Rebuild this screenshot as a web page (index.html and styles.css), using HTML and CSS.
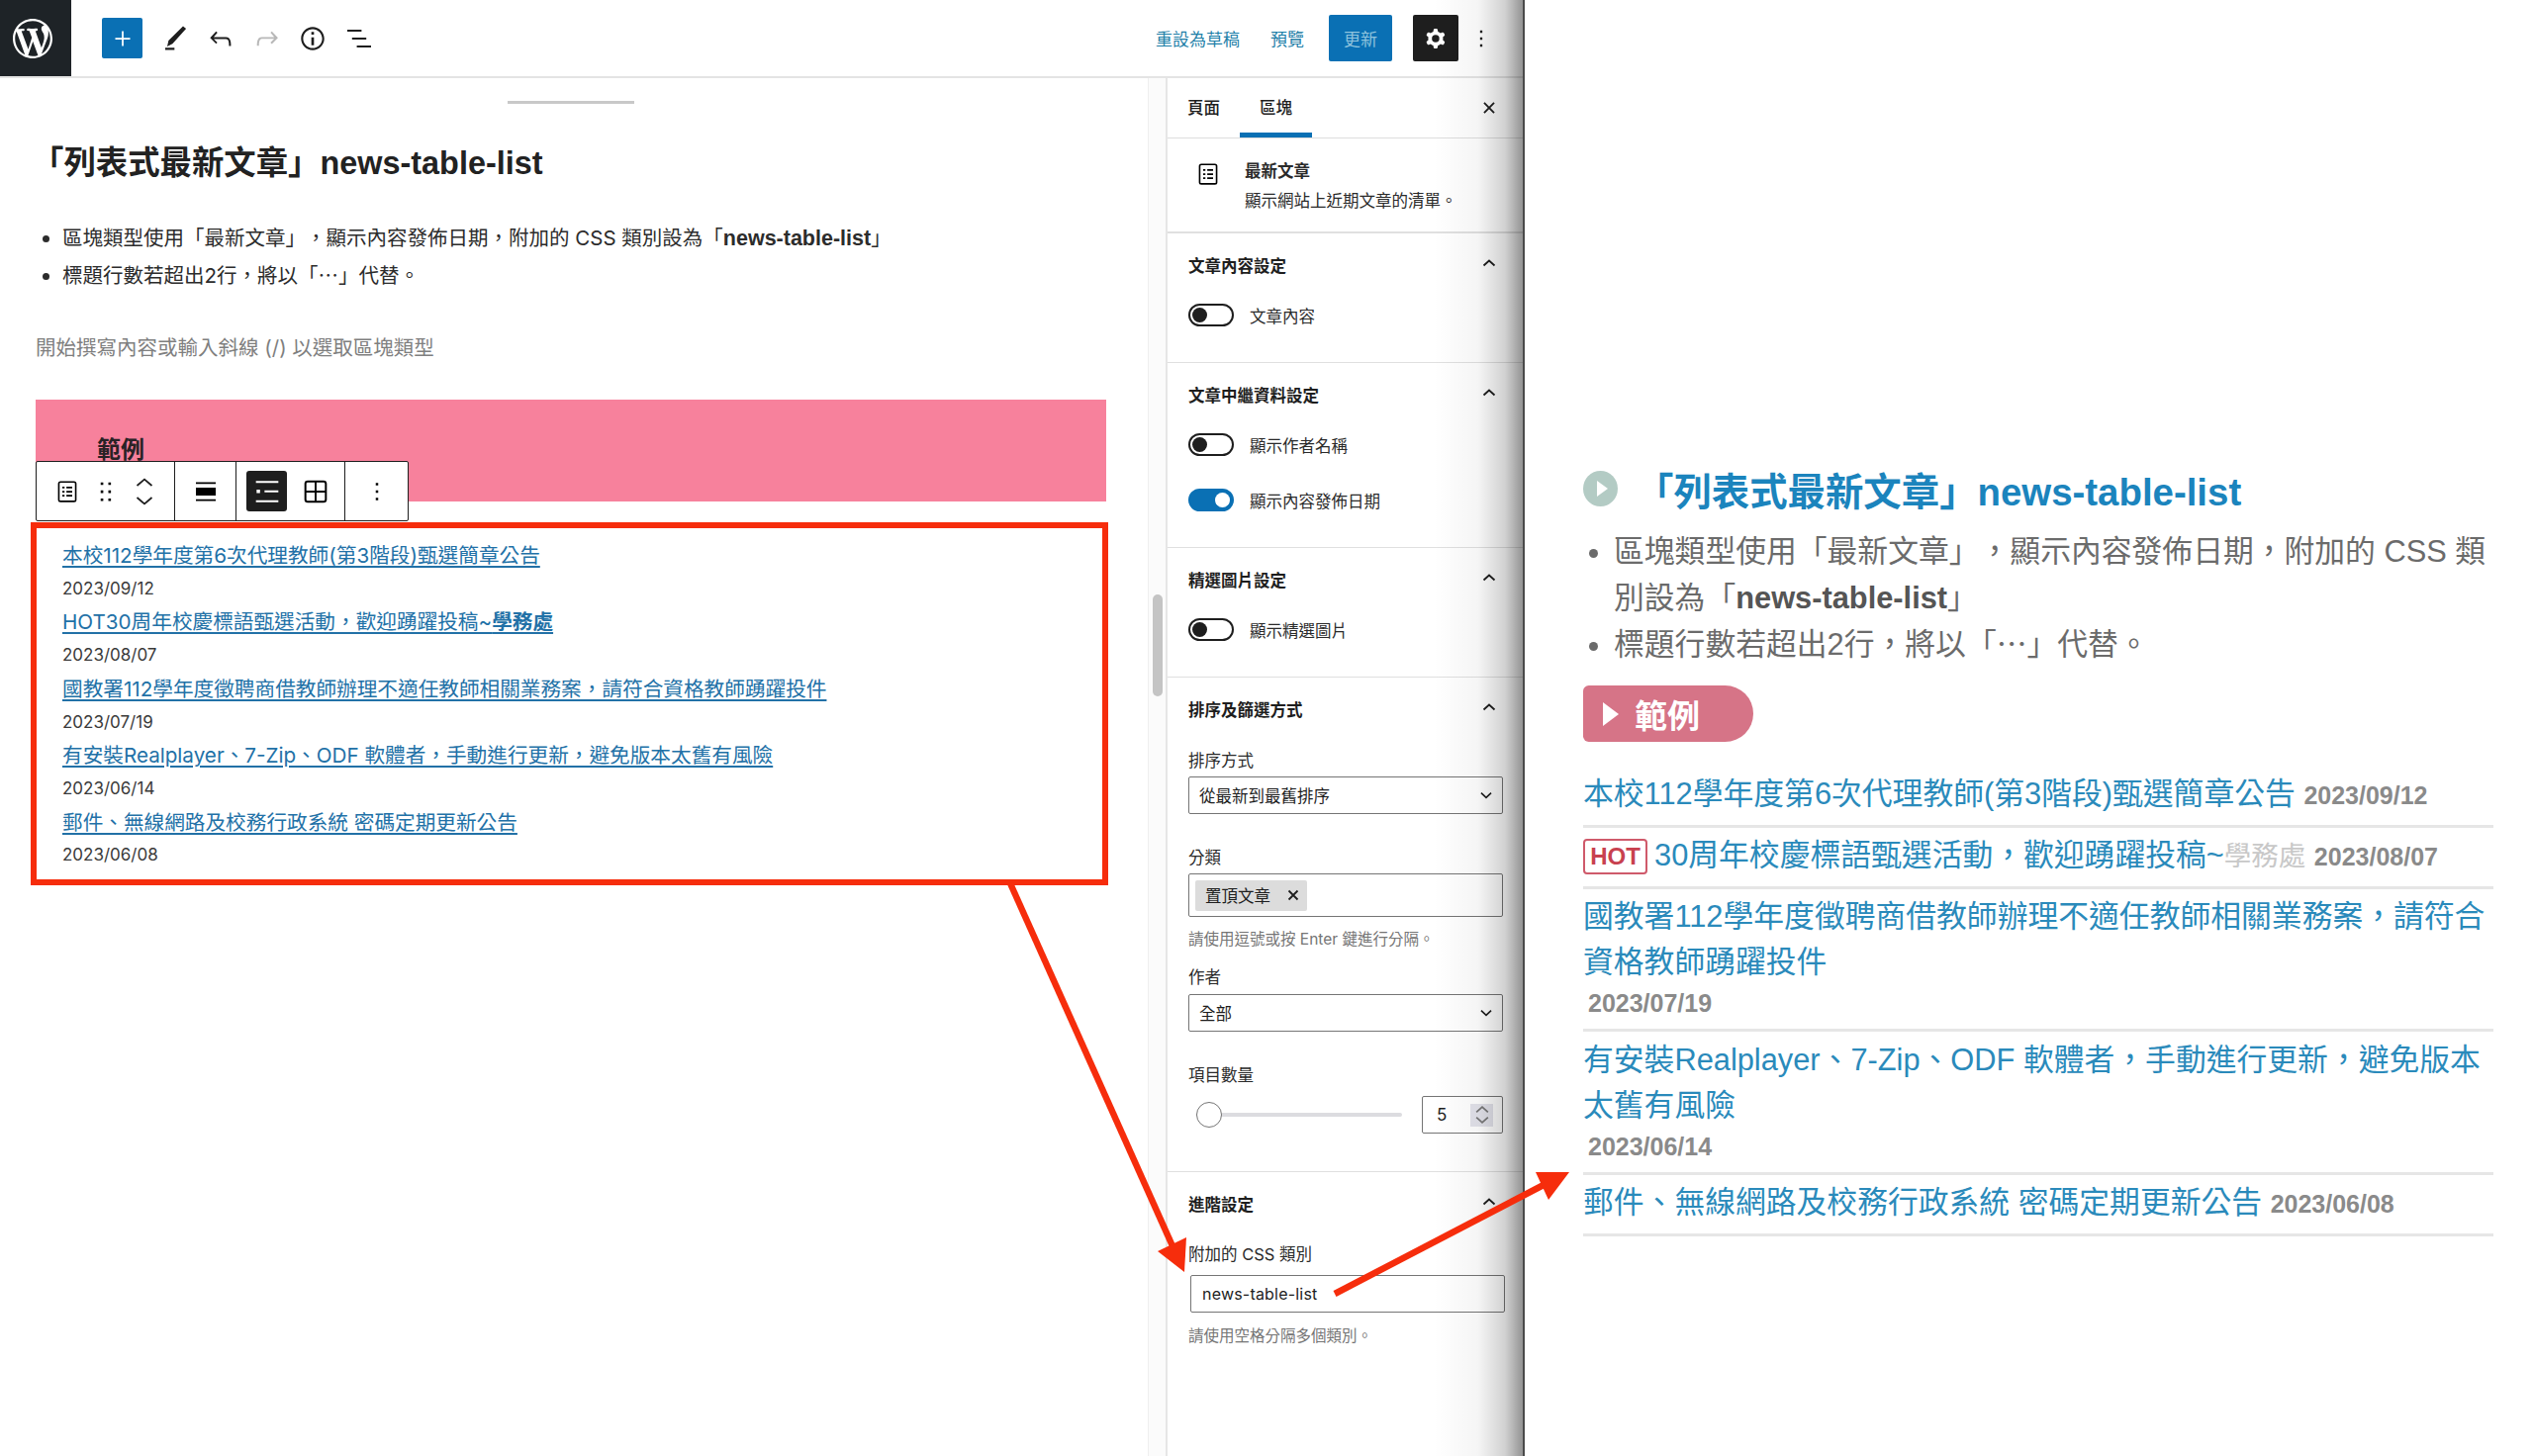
FILE: index.html
```html
<!DOCTYPE html>
<html lang="zh-Hant">

<head>
    <meta charset="UTF-8">
    <title>列表式最新文章 news-table-list</title>
    <link rel="stylesheet" href="styles.css">
</head>

<body>
    <svg class="icon-defs" width="0" height="0">
        <symbol id="chev-up" viewBox="0 0 24 24"><path d="M6.500 14.500 12 9.500l5.500 5" fill="none" stroke="currentColor" stroke-width="1.800"/></symbol>
        <symbol id="chev-down" viewBox="0 0 24 24"><path d="M6.500 9.500 12 14.500l5.500-5" fill="none" stroke="currentColor" stroke-width="1.800"/></symbol>
        <symbol id="dots" viewBox="0 0 24 24"><path d="M13 19h-2v-2h2v2zm0-6h-2v-2h2v2zm0-6h-2V5h2v2z"/></symbol>
        <symbol id="posts" viewBox="0 0 24 24"><path d="M6.500 3.500h11a2 2 0 0 1 2 2v13a2 2 0 0 1-2 2h-11a2 2 0 0 1-2-2v-13a2 2 0 0 1 2-2zm0 1.300a.7.7 0 0 0-.7.7v13a.7.7 0 0 0 .7.7h11a.7.7 0 0 0 .7-.7v-13a.7.7 0 0 0-.7-.7h-11zM8 8h1.800v1.400H8V8zm3.300 0H16v1.400h-4.700V8zM8 11.300h1.800v1.400H8v-1.400zm3.300 0H16v1.400h-4.700v-1.400zM8 14.600h1.800V16H8v-1.400zm3.300 0H16V16h-4.700v-1.400z" fill-rule="evenodd"/></symbol>
    </svg>

    <div class="window">
        <header class="topbar">
            <div class="wp-logo">
                <svg width="40" height="40" viewBox="0 0 20 20" fill="#fff"><path d="M20 10c0-5.510-4.490-10-10-10C4.480 0 0 4.490 0 10c0 5.520 4.480 10 10 10 5.510 0 10-4.480 10-10zM7.780 15.370L4.370 6.220c.550-.020 1.170-.080 1.170-.080.500-.060.440-1.130-.060-1.110 0 0-1.450.110-2.370.110-.180 0-.370 0-.580-.010C4.120 2.690 6.870 1.110 10 1.110c2.330 0 4.450.870 6.050 2.340-.680-.110-1.650.390-1.650 1.580 0 .740.450 1.360.900 2.100.350.610.550 1.360.550 2.460 0 1.490-1.400 5-1.400 5l-3.030-8.370c.540-.020.820-.170.820-.170.500-.050.440-1.250-.060-1.220 0 0-1.440.120-2.380.120-.870 0-2.330-.120-2.330-.120-.500-.030-.560 1.200-.060 1.220l.920.080 1.260 3.410zM17.410 10c.240-.640.740-1.870.430-4.250.700 1.290 1.050 2.710 1.050 4.250 0 3.290-1.730 6.240-4.400 7.780.970-2.590 1.940-5.200 2.920-7.780zM6.100 18.090C3.120 16.650 1.110 13.530 1.110 10c0-1.300.230-2.480.720-3.590C3.250 10.300 4.670 14.200 6.100 18.090zm4.030-6.630l2.580 6.980c-.860.290-1.760.450-2.710.450-.790 0-1.570-.110-2.290-.330.810-2.380 1.620-4.740 2.420-7.100z"/></svg>
            </div>
            <div class="tools">
                <button class="add-btn">
                    <svg width="30" height="30" viewBox="0 0 24 24" fill="#fff"><path d="M18 11.300h-5.300V6h-1.400v5.300H6v1.400h5.300V18h1.400v-5.300H18z"/></svg>
                </button>
                <svg class="tool" width="32" height="32" viewBox="0 0 24 24"><path d="M18 2.600 20.300 4.500 10 16 6 18 7 13.500zM4.500 19h7v1.700h-7z"/></svg>
                <svg class="tool" width="32" height="32" viewBox="0 0 24 24"><path d="M18.300 11.700c-.6-.6-1.400-.9-2.300-.9H6.700l2.900-3.300-1.100-1-4.500 5L8.500 16l1-1-2.700-2.700H16c.5 0 .9.2 1.300.5 1 1 1 3.400 1 4.500v.3h1.500v-.2c0-1.500 0-4.300-1.500-5.700z"/></svg>
                <svg class="tool tool-off" width="32" height="32" viewBox="0 0 24 24"><path d="M15.600 6.500l-1.100 1 2.900 3.300H8c-.9 0-1.700.3-2.300.9-1.400 1.500-1.400 4.200-1.400 5.600v.2h1.500v-.3c0-1.100 0-3.500 1-4.500.3-.3.7-.5 1.300-.5h9.200L14.500 15l1.100 1.100 4.600-4.600-4.600-5z"/></svg>
                <svg class="tool" width="32" height="32" viewBox="0 0 24 24"><path d="M12 3.200c-4.800 0-8.800 3.900-8.800 8.800 0 4.800 3.900 8.800 8.800 8.800 4.800 0 8.800-3.900 8.800-8.800 0-4.800-4-8.800-8.800-8.800zm0 16c-4 0-7.200-3.300-7.200-7.200C4.800 8 8 4.800 12 4.800s7.200 3.300 7.200 7.200c0 4-3.200 7.200-7.200 7.200zM11 17h2v-6h-2v6zm0-8h2V7h-2v2z"/></svg>
                <svg class="tool" width="32" height="32" viewBox="0 0 24 24"><path d="M13.800 5.200H3v1.500h10.800V5.200zm-3.600 12v1.500H21v-1.500H10.200zm7.200-6H6.600v1.500h10.800v-1.500z"/></svg>
            </div>
            <div class="actions">
                <a class="action-link">重設為草稿</a>
                <a class="action-link">預覽</a>
                <button class="update-btn">更新</button>
                <button class="gear-btn">
                    <svg width="30" height="30" viewBox="0 0 24 24" fill="#fff"><path fill-rule="evenodd" d="M10.289 4.836A1 1 0 0 1 11.275 4h1.306a1 1 0 0 1 .987.836l.244 1.466c.787.26 1.503.679 2.108 1.218l1.393-.522a1 1 0 0 1 1.216.437l.653 1.13a1 1 0 0 1-.23 1.273l-1.148.944a6.025 6.025 0 0 1 0 2.435l1.149.946a1 1 0 0 1 .23 1.272l-.653 1.13a1 1 0 0 1-1.216.437l-1.394-.522c-.605.54-1.32.958-2.108 1.218l-.244 1.466a1 1 0 0 1-.987.836h-1.306a1 1 0 0 1-.986-.836l-.244-1.466a5.995 5.995 0 0 1-2.108-1.218l-1.394.522a1 1 0 0 1-1.217-.436l-.653-1.131a1 1 0 0 1 .23-1.272l1.149-.946a6.026 6.026 0 0 1 0-2.435l-1.148-.944a1 1 0 0 1-.23-1.272l.653-1.131a1 1 0 0 1 1.217-.437l1.393.522a5.994 5.994 0 0 1 2.108-1.218l.244-1.466zM14.929 12a3 3 0 1 1-6 0 3 3 0 0 1 6 0z"/></svg>
                </button>
                <svg class="tool more" width="28" height="28" viewBox="0 0 24 24"><use href="#dots"/></svg>
            </div>
        </header>

        <div class="workspace">
            <main class="canvas">
                <div class="title-sep"></div>
                <h1>「列表式最新文章」news-table-list</h1>
                <ul class="intro">
                    <li>區塊類型使用「最新文章」，顯示內容發佈日期，附加的 CSS 類別設為「<strong>news-table-list</strong>」</li>
                    <li>標題行數若超出2行，將以「⋯」代替。</li>
                </ul>
                <p class="placeholder">開始撰寫內容或輸入斜線 (/) 以選取區塊類型</p>

                <div class="example">
                    <div class="pink-group">範例</div>
                    <div class="block-toolbar">
                        <div class="tb-group tb-first">
                            <svg class="tb-posts" width="30" height="30" viewBox="0 0 24 24"><use href="#posts"/></svg>
                            <svg class="tb-drag" width="30" height="30" viewBox="0 0 24 24"><path d="M7.800 4.500h2.100v2.100H7.800zM14 4.500h2.100v2.100H14zM7.800 11h2.100v2.100H7.800zM14 11h2.100v2.100H14zM7.800 17.500h2.100v2.100H7.800zM14 17.500h2.100v2.100H14z"/></svg>
                            <div class="mover">
                                <svg width="24" height="19" viewBox="0 0 24 19"><path d="M4.500 13 12 6.500l7.500 6.500" fill="none" stroke="#1e1e1e" stroke-width="1.700"/></svg>
                                <svg width="24" height="19" viewBox="0 0 24 19"><path d="M4.500 6 12 12.500 19.500 6" fill="none" stroke="#1e1e1e" stroke-width="1.700"/></svg>
                            </div>
                        </div>
                        <div class="tb-group tb-center">
                            <svg width="24" height="24" viewBox="0 0 24 24"><path d="M2 2.500h20v1.800H2zM2 8h20v8H2zM2 19.700h20v1.800H2z"/></svg>
                        </div>
                        <div class="tb-group tb-views">
                            <div class="view-active">
                                <svg width="32" height="32" viewBox="0 0 24 24" fill="#fff"><path d="M3.500 4h17v1.500h-17zM3.500 18.500h17V20h-17zM4 10.500h2.600v2.600H4zM10 11h10.500v1.500H10z"/></svg>
                            </div>
                            <svg width="32" height="32" viewBox="0 0 24 24"><path fill-rule="evenodd" d="M6 3.500h12A2.500 2.500 0 0 1 20.500 6v12a2.500 2.500 0 0 1-2.500 2.500H6A2.500 2.500 0 0 1 3.500 18V6A2.500 2.500 0 0 1 6 3.500zM5 11.300h6.300V5H6a1 1 0 0 0-1 1zm7.700 0H19V6a1 1 0 0 0-1-1h-5.300zM5 12.700V18a1 1 0 0 0 1 1h5.300v-6.300zm7.700 0V19H18a1 1 0 0 0 1-1v-5.300z"/></svg>
                        </div>
                        <div class="tb-group tb-center tb-last">
                            <svg width="30" height="30" viewBox="0 0 24 24"><use href="#dots"/></svg>
                        </div>
                    </div>
                </div>

                <ul class="latest-box">
                    <li><a>本校112學年度第6次代理教師(第3階段)甄選簡章公告</a><time>2023/09/12</time></li>
                    <li><a>HOT30周年校慶標語甄選活動，歡迎踴躍投稿~<b>學務處</b></a><time>2023/08/07</time></li>
                    <li><a>國教署112學年度徵聘商借教師辦理不適任教師相關業務案，請符合資格教師踴躍投件</a><time>2023/07/19</time></li>
                    <li><a>有安裝Realplayer、7-Zip、ODF 軟體者，手動進行更新，避免版本太舊有風險</a><time>2023/06/14</time></li>
                    <li><a>郵件、無線網路及校務行政系統 密碼定期更新公告</a><time>2023/06/08</time></li>
                </ul>
            </main>

            <div class="gutter"><div class="gutter-thumb"></div></div>

            <aside class="sidebar">
                <div class="tabs">
                    <div class="tab">頁面</div>
                    <div class="tab tab-active">區塊</div>
                    <svg class="tab-close" width="22" height="22" viewBox="0 0 24 24"><path d="M6.500 6.500l11 11M17.500 6.500l-11 11" stroke="#1e1e1e" stroke-width="2"/></svg>
                </div>

                <div class="block-card">
                    <svg width="30" height="30" viewBox="0 0 24 24"><use href="#posts"/></svg>
                    <div>
                        <div class="card-title">最新文章</div>
                        <div>顯示網站上近期文章的清單。</div>
                    </div>
                </div>

                <section class="panel">
                    <div class="panel-head"><span>文章內容設定</span><svg width="24" height="24"><use href="#chev-up"/></svg></div>
                    <div class="toggle-row"><span class="toggle"></span>文章內容</div>
                </section>

                <section class="panel">
                    <div class="panel-head"><span>文章中繼資料設定</span><svg width="24" height="24"><use href="#chev-up"/></svg></div>
                    <div class="toggle-row"><span class="toggle"></span>顯示作者名稱</div>
                    <div class="toggle-row toggle-row-next"><span class="toggle toggle-on"></span>顯示內容發佈日期</div>
                </section>

                <section class="panel">
                    <div class="panel-head"><span>精選圖片設定</span><svg width="24" height="24"><use href="#chev-up"/></svg></div>
                    <div class="toggle-row"><span class="toggle"></span>顯示精選圖片</div>
                </section>

                <section class="panel panel-sort">
                    <div class="panel-head"><span>排序及篩選方式</span><svg width="24" height="24"><use href="#chev-up"/></svg></div>
                    <label class="field-label first-label">排序方式</label>
                    <div class="select">從最新到最舊排序<svg width="22" height="22"><use href="#chev-down"/></svg></div>
                    <label class="field-label">分類</label>
                    <div class="token-input"><span class="token">置頂文章<svg width="18" height="18" viewBox="0 0 24 24"><path d="M6 6l12 12M18 6 6 18" stroke="#1e1e1e" stroke-width="2.400"/></svg></span></div>
                    <p class="help">請使用逗號或按 Enter 鍵進行分隔。</p>
                    <label class="field-label author-label">作者</label>
                    <div class="select">全部<svg width="22" height="22"><use href="#chev-down"/></svg></div>
                    <label class="field-label">項目數量</label>
                    <div class="range-row">
                        <div class="range"><span class="range-thumb"></span></div>
                        <div class="number-input">5
                            <span class="spinner">
                                <svg width="14" height="11" viewBox="6 8 12 8"><path d="M7 14.500 12 10l5 4.500" fill="none" stroke="#777" stroke-width="1.500"/></svg>
                                <svg width="14" height="11" viewBox="6 8 12 8"><path d="M7 9.500 12 14l5-4.500" fill="none" stroke="#777" stroke-width="1.500"/></svg>
                            </span>
                        </div>
                    </div>
                </section>

                <section class="panel panel-adv">
                    <div class="panel-head"><span>進階設定</span><svg width="24" height="24"><use href="#chev-up"/></svg></div>
                    <label class="field-label first-label">附加的 CSS 類別</label>
                    <div class="text-input">news-table-list</div>
                    <p class="help help-adv">請使用空格分隔多個類別。</p>
                </section>
            </aside>
        </div>

        <div class="edge-shade"></div>
    </div>

    <section class="frontend">
        <h2><span class="play-dot"><i></i></span>「列表式最新文章」news-table-list</h2>
        <ul class="fe-intro">
            <li>區塊類型使用「最新文章」，顯示內容發佈日期，附加的 CSS 類別設為「<strong>news-table-list</strong>」</li>
            <li>標題行數若超出2行，將以「⋯」代替。</li>
        </ul>
        <div class="pill"><i></i>範例</div>
        <ul class="news-table-list">
            <li><a>本校112學年度第6次代理教師(第3階段)甄選簡章公告</a> <time>2023/09/12</time></li>
            <li><span class="hot">HOT</span><a>30周年校慶標語甄選活動，歡迎踴躍投稿~</a><span class="dept">學務處</span> <time>2023/08/07</time></li>
            <li><a>國教署112學年度徵聘商借教師辦理不適任教師相關業務案，請符合資格教師踴躍投件</a> <time class="own-line">2023/07/19</time></li>
            <li><a>有安裝Realplayer、7-Zip、ODF 軟體者，手動進行更新，避免版本太舊有風險</a> <time class="own-line">2023/06/14</time></li>
            <li><a>郵件、無線網路及校務行政系統 密碼定期更新公告</a> <time>2023/06/08</time></li>
        </ul>
    </section>

    <!-- annotation arrows drawn over the screenshot -->
    <svg class="arrows" width="2560" height="1472" viewBox="0 0 2560 1472">
        <path d="M1021 893 1186 1262" stroke="#f62d0c" stroke-width="6.500" fill="none"/>
        <path d="M1197 1286 1170 1265 1199 1251z" fill="#f62d0c"/>
        <path d="M1349 1308 1560 1198" stroke="#f62d0c" stroke-width="6.500" fill="none"/>
        <path d="M1586 1185 1552 1185 1565 1213z" fill="#f62d0c"/>
    </svg>
</body>

</html>
```

FILE: styles.css
```css
/* Basic Reset */
* {
    margin: 0;
    padding: 0;
    box-sizing: border-box;
}

body {
    position: relative;
    display: flex;
    width: 2560px;
    height: 1472px;
    overflow: hidden;
    background-color: #fff;
    color: #1e1e1e;
    font-family: Inter, "Noto Sans CJK TC", sans-serif;
    text-spacing-trim: space-all;
}

ul {
    list-style: none;
}

button {
    border: none;
    display: flex;
    align-items: center;
    justify-content: center;
    font-family: inherit;
}

.icon-defs {
    position: absolute;
}

/* Editor window */
.window {
    position: relative;
    display: flex;
    flex-direction: column;
    width: 1541px;
    height: 100%;
    flex-shrink: 0;
    border-right: 2px solid #4a4a4a;
}

.edge-shade {
    position: absolute;
    top: 0;
    right: 0;
    bottom: 0;
    width: 90px;
    background: linear-gradient(to right, rgba(0, 0, 0, 0), rgba(0, 0, 0, 0.04) 50%, rgba(0, 0, 0, 0.18) 80%, rgba(0, 0, 0, 0.42));
    pointer-events: none;
}

/* Top bar */
.topbar {
    display: flex;
    align-items: center;
    height: 79px;
    flex-shrink: 0;
    border-bottom: 2px solid #e4e4e4;
}

.wp-logo {
    display: flex;
    align-items: center;
    justify-content: center;
    width: 72px;
    height: 77px;
    background-color: #1e2327;
    padding-right: 6px;
}

.tools {
    display: flex;
    align-items: center;
    gap: 14.400px;
    margin-left: 31px;
}

.add-btn {
    width: 41px;
    height: 41px;
    margin-right: 2.600px;
    background-color: #0a70b4;
    border-radius: 2px;
}

.tool {
    display: block;
    fill: #1e1e1e;
}

.tool-off {
    fill: #b8b8b8;
}

.actions {
    display: flex;
    align-items: center;
    margin-left: auto;
}

.action-link {
    font-size: 17px;
    color: #1f7fa8;
    margin-right: 31px;
}

.update-btn {
    width: 64px;
    height: 47px;
    margin-left: -6px;
    background-color: #0a70b4;
    color: #8fc3dd;
    font-size: 17px;
    border-radius: 2px;
}

.gear-btn {
    width: 46px;
    height: 47px;
    margin-left: 21px;
    background-color: #1e1e1e;
    border-radius: 2px;
}

.more {
    margin: 0 28px 0 9px;
}

.workspace {
    display: flex;
    flex: 1;
    min-height: 0;
}

/* Canvas */
.canvas {
    width: 1160px;
    padding-left: 36px;
    flex-shrink: 0;
}

.title-sep {
    width: 128px;
    height: 3px;
    margin: 23px 0 0 477px;
    background-color: #c8c8c8;
}

h1 {
    margin-top: 38px;
    margin-left: -4px;
    font-size: 32.400px;
    line-height: 44px;
    font-weight: 700;
    font-family: "Liberation Sans", "Noto Sans CJK TC", sans-serif;
    color: #222;
}

.intro {
    margin-top: 35px;
    padding-left: 27px;
    font-size: 20.500px;
    line-height: 38px;
    color: #2c2c2c;
    list-style: disc;
}

.intro strong {
    font-family: "Liberation Sans", "Noto Sans CJK TC", sans-serif;
    font-size: 21.500px;
}

.placeholder {
    margin-top: 39px;
    font-size: 20.500px;
    line-height: 30px;
    color: #7f7f7f;
}

.example {
    position: relative;
    width: 1082px;
    margin-top: 37px;
}

.pink-group {
    height: 103px;
    padding: 33px 0 0 62px;
    background-color: #f7819c;
    font-size: 24px;
    line-height: 36px;
    font-weight: 700;
    color: #2a2226;
}

.block-toolbar {
    position: absolute;
    top: 62px;
    left: 0;
    display: flex;
    width: 377px;
    height: 61px;
    background-color: #fff;
    border: 1px solid #1e1e1e;
    border-radius: 2px;
}

.tb-group {
    display: flex;
    align-items: center;
    border-right: 1px solid #1e1e1e;
}

.tb-first {
    width: 140px;
    padding-left: 16px;
    gap: 9px;
}

.tb-center {
    justify-content: center;
    width: 63px;
}

.tb-views {
    width: 110px;
    padding-left: 10px;
    gap: 13px;
}

.tb-last {
    border-right: none;
}

.mover {
    display: flex;
    flex-direction: column;
    margin-left: 3px;
}

.mover svg {
    display: block;
}

.view-active {
    display: flex;
    align-items: center;
    justify-content: center;
    width: 41px;
    height: 41px;
    background-color: #1e1e1e;
    border-radius: 3px;
}

.latest-box {
    width: 1089px;
    height: 367px;
    margin: 21px 0 0 -5px;
    padding: 11px 0 0 26px;
    border: 6px solid #f62d0c;
    font-size: 20.650px;
    line-height: 33.700px;
}

.latest-box a {
    display: block;
    color: #2271a7;
    text-decoration: underline;
    text-underline-offset: 3px;
}

.latest-box b {
    font-weight: 700;
}

.latest-box time {
    display: block;
    font-size: 17px;
    color: #3a3a3a;
}

.gutter {
    width: 20px;
    padding: 0 5px;
    padding-top: 522px;
    flex-shrink: 0;
    background-color: #fbfbfb;
    border-left: 1px solid #efefef;
    border-right: 2px solid #e6e6e6;
}

.gutter-thumb {
    width: 10px;
    height: 103px;
    margin-left: -1px;
    background-color: #c4c4c4;
    border-radius: 5px;
}

/* Sidebar */
.sidebar {
    flex: 1;
    min-width: 0;
    font-size: 16.500px;
}

.tabs {
    display: flex;
    align-items: stretch;
    height: 61px;
    border-bottom: 1px solid #dedede;
}

.tab {
    display: flex;
    align-items: center;
    padding: 5px 20px 0;
    font-weight: 500;
    line-height: 1;
    border-bottom: 5px solid transparent;
}

.tab-active {
    border-bottom-color: #0a70b4;
}

.tab-close {
    align-self: center;
    margin-left: auto;
    margin-right: 23px;
}

.block-card {
    display: flex;
    gap: 22px;
    padding: 18px 0 16px 26px;
    border-bottom: 2px solid #e0e0e0;
    line-height: 30px;
    color: #2a2a2a;
}

.block-card > svg {
    margin-top: 3px;
}

.card-title {
    font-weight: 600;
}

.panel {
    padding: 17px 20px 36px 21px;
    border-bottom: 1px solid #e0e0e0;
}

.panel-head {
    display: flex;
    align-items: center;
    justify-content: space-between;
    height: 30px;
    font-weight: 700;
}

.panel-head svg {
    margin: -4px 2px 0 0;
}

.toggle-row {
    display: flex;
    align-items: center;
    gap: 16px;
    height: 23px;
    margin-top: 24px;
    color: #2a2a2a;
}

.toggle-row-next {
    margin-top: 33px;
}

.toggle {
    position: relative;
    display: block;
    width: 46px;
    height: 23px;
    border: 2px solid #1e1e1e;
    border-radius: 12px;
    background-color: #fff;
}

.toggle::after {
    content: "";
    position: absolute;
    top: 2px;
    left: 2px;
    width: 15px;
    height: 15px;
    border-radius: 50%;
    background-color: #1e1e1e;
}

.toggle-on {
    border-color: #0a70b4;
    background-color: #0a70b4;
}

.toggle-on::after {
    left: auto;
    right: 2px;
    background-color: #fff;
}

.field-label {
    display: block;
    margin-top: 32px;
    margin-bottom: 4px;
    line-height: 24px;
    color: #2a2a2a;
}

.first-label {
    margin-top: 25px;
}

.author-label {
    margin-top: 15px;
    margin-bottom: 5px;
}

.select {
    display: flex;
    align-items: center;
    justify-content: space-between;
    height: 38px;
    padding: 0 5px 0 10px;
    border: 1px solid #757575;
    border-radius: 2px;
    color: #1e1e1e;
}

.token-input {
    display: flex;
    align-items: center;
    height: 44px;
    padding-left: 6px;
    border: 1px solid #757575;
    border-radius: 2px;
}

.token {
    display: flex;
    align-items: center;
    justify-content: space-between;
    width: 113px;
    height: 31px;
    padding: 0 5px 0 10px;
    background-color: #dcdcdc;
    border-radius: 2px;
}

.help {
    margin-top: 12px;
    font-size: 15.500px;
    line-height: 22px;
    color: #757575;
}

.range-row {
    display: flex;
    align-items: center;
    justify-content: space-between;
    margin-top: 9px;
}

.range {
    position: relative;
    width: 208px;
    height: 4px;
    margin-left: 8px;
    background-color: #dcdce0;
    border-radius: 2px;
}

.range-thumb {
    position: absolute;
    top: -11px;
    left: 0;
    width: 26px;
    height: 26px;
    background-color: #fff;
    border: 1px solid #757575;
    border-radius: 50%;
}

.number-input {
    display: flex;
    align-items: center;
    justify-content: space-between;
    width: 82px;
    height: 38px;
    padding: 0 9px 0 14px;
    border: 1px solid #757575;
    border-radius: 2px;
    font-size: 17px;
}

.spinner {
    display: flex;
    flex-direction: column;
    align-items: center;
    width: 23px;
    height: 23px;
    background-color: #e2e2ea;
}

.spinner svg {
    display: block;
}

.panel-sort {
    padding-bottom: 38px;
}

.panel-adv {
    border-bottom: none;
}

.panel-adv .first-label {
    margin-top: 24px;
    margin-bottom: 0;
}

.text-input {
    display: flex;
    align-items: center;
    height: 38px;
    margin: 9px -2px 0 2px;
    padding-left: 11px;
    border: 1px solid #757575;
    border-radius: 2px;
    font-size: 16px;
    letter-spacing: 0.2px;
}

.help-adv {
    margin-top: 13px;
}

/* Front-end preview */
.frontend {
    flex: 1;
    padding: 469px 40px 0 59px;
    font-family: "Liberation Sans", "Noto Sans CJK TC", sans-serif;
}

.frontend h2 {
    display: flex;
    align-items: center;
    height: 50px;
    font-size: 38.400px;
    font-weight: 700;
    color: #1b84bd;
}

.play-dot {
    display: flex;
    align-items: center;
    justify-content: center;
    width: 35px;
    height: 36px;
    margin-right: 18px;
    flex-shrink: 0;
    background-color: #b3cbc4;
    border-radius: 50%;
}

.play-dot i {
    width: 0;
    height: 0;
    margin-left: 3px;
    border-left: 11px solid #fff;
    border-top: 8px solid transparent;
    border-bottom: 8px solid transparent;
}

.fe-intro {
    margin-top: 15px;
    padding-left: 31px;
    list-style: disc;
    font-size: 30.800px;
    line-height: 47px;
    color: #6b6b6b;
}

.fe-intro strong {
    color: #555;
}

.pill {
    display: flex;
    align-items: center;
    width: 172px;
    height: 57px;
    margin-top: 18px;
    padding-left: 20px;
    background-color: #d67487;
    border-radius: 6px 30px 30px 6px;
    color: #fff;
    font-size: 33px;
    font-weight: 700;
}

.pill i {
    width: 0;
    height: 0;
    margin-right: 16px;
    border-left: 16px solid #fff;
    border-top: 12px solid transparent;
    border-bottom: 12px solid transparent;
}

.news-table-list {
    margin-top: 30px;
}

.news-table-list li {
    padding: 0 0 8px;
    margin-bottom: 5px;
    border-bottom: 3px solid #e6e6e6;
    font-size: 30.800px;
    line-height: 46px;
}

.news-table-list li:nth-child(4) {
    padding-top: 1px;
}

.news-table-list a {
    color: #2a8abb;
}

.news-table-list time {
    font-size: 25px;
    font-weight: 700;
    line-height: 1;
    color: #8a8a8a;
}

.news-table-list .own-line {
    display: block;
    padding-left: 5px;
    line-height: 36px;
}

.hot {
    display: inline-block;
    width: 65px;
    height: 36px;
    margin: -4px 7px -4px 0;
    border: 2px solid #cf5a6b;
    border-radius: 4px;
    color: #c8414f;
    font-size: 24px;
    font-weight: 700;
    line-height: 32px;
    text-align: center;
    vertical-align: 1px;
}

.dept {
    color: #c8c8c8;
    font-size: 27.500px;
    line-height: 1;
}

.arrows {
    position: absolute;
    top: 0;
    left: 0;
    pointer-events: none;
}
```
